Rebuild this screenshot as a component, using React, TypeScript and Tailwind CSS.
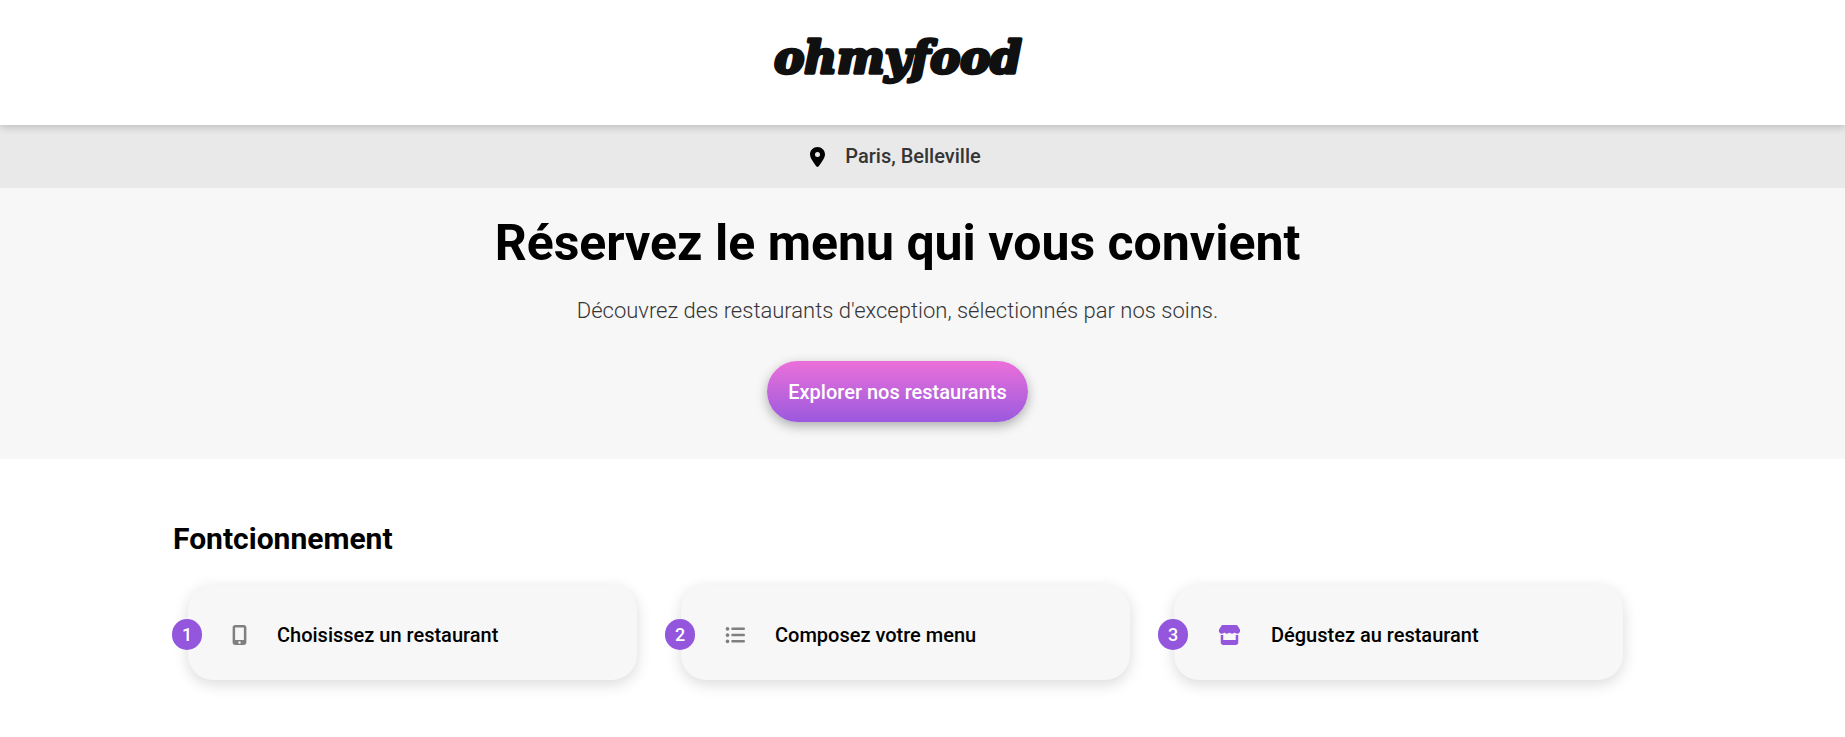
import type { IconType } from "react-icons";
import {
  FaListUl,
  FaLocationDot,
  FaMobileScreenButton,
  FaStore,
} from "react-icons/fa6";

type Step = { label: string; icon: IconType; look: string };

const steps: Step[] = [
  { label: "Choisissez un restaurant", icon: FaMobileScreenButton, look: "h-5 w-[15px] text-[#808080]" },
  { label: "Composez votre menu", icon: FaListUl, look: "h-5 w-5 text-[#808080]" },
  { label: "Dégustez au restaurant", icon: FaStore, look: "h-5 w-[23px] text-[#9356dc]" },
];

function Logo() {
  return (
    <svg width="260" height="60" viewBox="0 0 260 60" className="overflow-visible">
      <text
        x="130"
        y="43"
        textAnchor="middle"
        strokeWidth="3.5"
        strokeLinejoin="round"
        className="fill-[#101010] stroke-[#101010] font-['DejaVu_Serif',serif] text-[45px] font-bold italic"
      >
        ohmyfood
      </text>
    </svg>
  );
}

function Header() {
  return (
    <header className="relative flex justify-center bg-white pt-[30px] pb-[35px] pr-[50px] shadow-[0_2px_8px_rgba(0,0,0,0.2)]">
      <a href="#">
        <Logo />
      </a>
    </header>
  );
}

function LocationBar() {
  return (
    <div className="flex items-center justify-center gap-5 bg-[#e9e9e9] pt-4 pb-4 pr-[54px] text-xl leading-[31px] font-medium text-[#353535]">
      <FaLocationDot className="h-5 w-[15px] text-black" aria-hidden="true" />
      <span>Paris, Belleville</span>
    </div>
  );
}

function Hero() {
  return (
    <section className="flex flex-col items-center bg-[#f7f7f7] pt-[25px] pb-[37px] pr-[50px] text-center">
      <h1 className="text-[50px] leading-[60px] font-bold">
        Réservez le menu qui vous convient
      </h1>
      <p className="mt-6 text-[22px] leading-[28px] font-light text-[#353535]">
        Découvrez des restaurants d'exception, sélectionnés par nos soins.
      </p>
      <button
        type="button"
        className="mt-9 h-[61px] rounded-full bg-linear-to-b from-[#ec6fd9] to-[#9b58de] px-[21px] text-xl font-medium text-white shadow-[0_4px_12px_rgba(0,0,0,0.3)]"
      >
        Explorer nos restaurants
      </button>
    </section>
  );
}

function Steps() {
  return (
    <section className="pt-15 pb-14 pl-[172px] pr-[222px]">
      <h2 className="pl-px text-[30px] leading-[40px] font-bold">Fontcionnement</h2>
      <ol className="mt-[26px] grid grid-cols-3 gap-11 pl-4">
        {steps.map(({ label, icon: Icon, look }, index) => (
          <li
            key={label}
            className="flex h-[95px] items-center gap-[30px] rounded-[25px] bg-[#f7f7f7] pt-1 text-xl font-medium shadow-[0_4px_15px_rgba(0,0,0,0.15)]"
          >
            <span className="-ml-4 flex h-[31px] w-[30px] shrink-0 items-center justify-center rounded-full bg-[#9356dc] text-lg text-white">
              {index + 1}
            </span>
            <Icon className={`shrink-0 ${look}`} aria-hidden="true" />
            <span>{label}</span>
          </li>
        ))}
      </ol>
    </section>
  );
}

export default function App() {
  return (
    <div className="bg-white font-[Roboto,sans-serif] text-black">
      <Header />
      <main>
        <LocationBar />
        <Hero />
        <Steps />
      </main>
    </div>
  );
}
